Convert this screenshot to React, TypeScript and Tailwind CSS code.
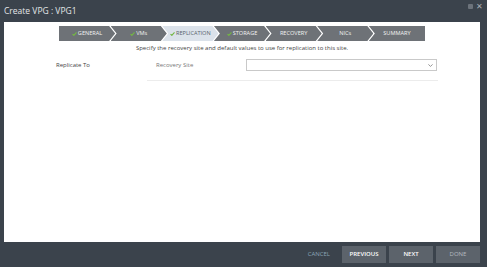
import { useState } from "react";

const steps = [
  { name: "GENERAL", done: true },
  { name: "VMs", done: true },
  { name: "REPLICATION", done: true, active: true },
  { name: "STORAGE", done: true },
  { name: "RECOVERY", done: false },
  { name: "NICs", done: false },
  { name: "SUMMARY", done: false },
];

const Check = () => (
  <svg width="5" height="4" viewBox="0 0 6 5" className="mr-[1px]">
    <path d="M0.5 2.6 L2.2 4.2 L5.5 0.6" fill="none" stroke="#74b843" strokeWidth="1.4" />
  </svg>
);

const App = () => {
  const [site, setSite] = useState("");
  return (
    <div className="w-[487px] h-[267px] bg-[#3b434c] flex flex-col font-['Open_Sans',sans-serif] overflow-hidden">
      {/* title bar */}
      <div className="h-[22px] flex items-center justify-between pl-[4px] pr-[4px]">
        <span className="text-[8.5px] text-[#e4e6e8]">Create VPG : VPG1</span>
        <div className="flex items-center gap-[3px] -mt-[10px]">
          <span className="w-[5px] h-[5px] bg-[#6c737b] rounded-[1px]" />
          <span className="text-[8px] leading-none text-[#a9afb5]">✕</span>
        </div>
      </div>

      {/* body */}
      <div className="ml-[4px] mr-[7px] h-[220px] bg-white flex flex-col">
        <div className="mt-[4px] ml-[55px] w-[366px] h-[15px] flex">
          {steps.map((s, i) => {
            const first = i === 0;
            const last = i === steps.length - 1;
            const clip = first
              ? "[clip-path:polygon(0_0,calc(100%-6px)_0,100%_50%,calc(100%-6px)_100%,0_100%)]"
              : last
              ? "[clip-path:polygon(0_0,100%_0,100%_100%,0_100%,6px_50%)]"
              : "[clip-path:polygon(0_0,calc(100%-6px)_0,100%_50%,calc(100%-6px)_100%,0_100%,6px_50%)]";
            return (
              <div
                key={s.name}
                className={`flex-1 flex items-center justify-center text-[5.6px] ${clip} ${
                  first ? "" : "-ml-[4.5px]"
                } ${s.active ? "bg-[#dbe2ea] text-[#59626c]" : "bg-[#6e7277] text-[#f2f2f2]"}`}
              >
                {s.done && <Check />}
                {s.name}
              </div>
            );
          })}
        </div>

        <p className="mt-[3px] text-center text-[6px] text-[#3f3f3f]">
          Specify the recovery site and default values to use for replication to this site.
        </p>

        <div className="mt-[5px] flex items-center h-[14px]">
          <span className="w-[98px] pl-[52px] text-[6px] text-[#444] whitespace-nowrap">Replicate To</span>
          <span className="w-[99px] pl-[54px] text-[6px] text-[#777] whitespace-nowrap">Recovery Site</span>
          <div className="ml-[45px] w-[191px] h-[12px] border border-[#c9c9c9] flex items-center justify-end pr-[3px]">
            <select
              value={site}
              onChange={(e) => setSite(e.target.value)}
              className="hidden"
            >
              <option value="" />
            </select>
            <svg width="5" height="3" viewBox="0 0 5 3">
              <path d="M0.4 0.4 L2.5 2.4 L4.6 0.4" fill="none" stroke="#8a8a8a" strokeWidth="0.9" />
            </svg>
          </div>
        </div>
        <div className="mt-[8px] ml-[143px] w-[291px] h-px bg-[#ececec]" />
      </div>

      {/* footer */}
      <div className="flex-1 flex items-center justify-end gap-[3px] mr-[7px]">
        <button className="mr-[9px] text-[6px] text-[#8aa3b5]">CANCEL</button>
        <button className="w-[44px] h-[17px] bg-[#5c636b] text-[6px] font-semibold text-white">PREVIOUS</button>
        <button className="w-[44px] h-[17px] bg-[#5c636b] text-[6px] font-semibold text-white">NEXT</button>
        <button className="w-[44px] h-[17px] bg-[#5c636b] text-[6px] text-[#b5bac0]">DONE</button>
      </div>
    </div>
  );
};

export default App;
